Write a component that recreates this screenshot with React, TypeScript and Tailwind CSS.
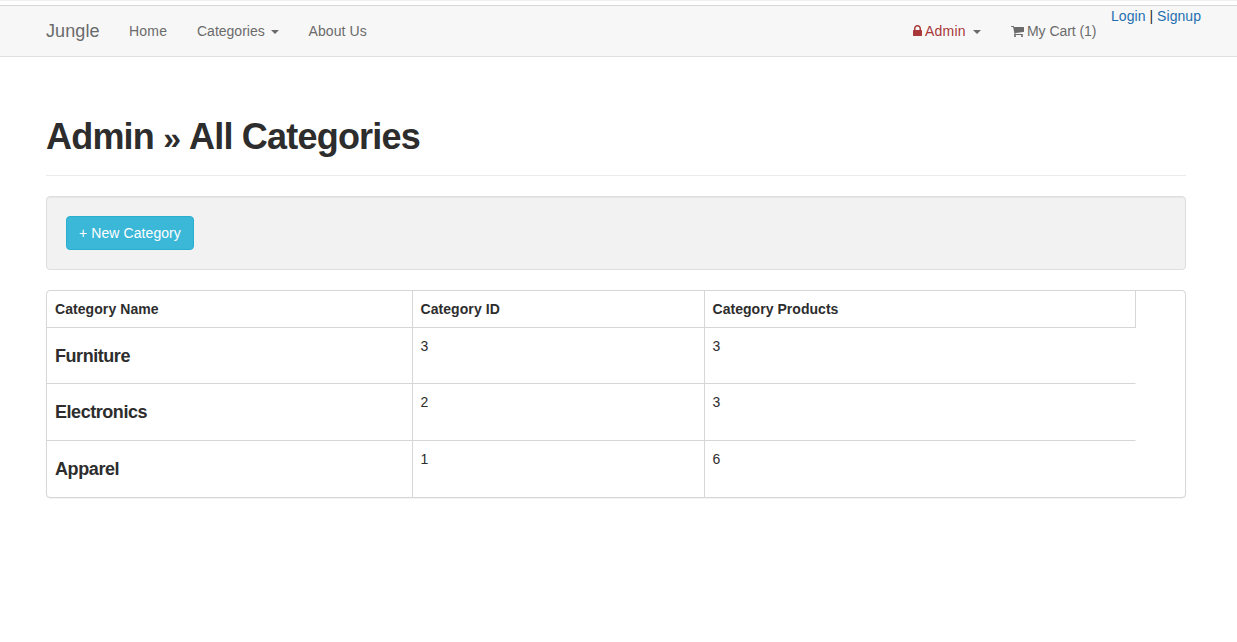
import React from "react";

const categories = [
  { name: "Furniture", id: 3, products: 3, track: "tracking-[-0.45px]", height: "h-14" },
  { name: "Electronics", id: 2, products: 3, track: "tracking-[-0.45px]", height: "h-[57px]" },
  { name: "Apparel", id: 1, products: 6, track: "tracking-[-0.4px]", height: "h-[57px]" },
];

function Caret() {
  return (
    <span className="mt-px h-0 w-0 border-x-4 border-t-4 border-x-transparent border-t-[#6b6b6b]" />
  );
}

function LockIcon() {
  return (
    <svg className="mr-[3px] h-[14px] w-[9px]" viewBox="320 0 1152 1792" fill="currentColor" aria-hidden="true">
      <path d="M640 768h512v-192q0-106-75-181t-181-75-181 75-75 181v192zm832 96v576q0 40-28 68t-68 28h-960q-40 0-68-28t-28-68v-576q0-40 28-68t68-28h32v-192q0-184 132-316t316-132 316 132 132 316v192h32q40 0 68 28t28 68z" />
    </svg>
  );
}

function CartIcon() {
  return (
    <svg className="mr-[3px] h-[14px] w-[13px]" viewBox="64 0 1664 1792" fill="currentColor" aria-hidden="true">
      <path d="M704 1536q0 52-38 90t-90 38-90-38-38-90 38-90 90-38 90 38 38 90zm896 0q0 52-38 90t-90 38-90-38-38-90 38-90 90-38 90 38 38 90zm128-1088v512q0 24-16.5 42.5t-40.5 21.5l-1044 122q13 60 13 70 0 16-24 64h920q26 0 45 19t19 45-19 45-45 19h-1024q-26 0-45-19t-19-45q0-11 8-31.5t16-36 21.5-40 15.5-29.5l-177-823h-204q-26 0-45-19t-19-45 19-45 45-19h256q16 0 28.5 6.5t19.5 15.5 13 24.5 8 26 5.5 29.5 4.5 26h1201q26 0 45 19t19 45z" />
    </svg>
  );
}

export default function App() {
  return (
    <div className="h-[642px] overflow-hidden border-t border-[#f0f0f0] bg-white font-['Liberation_Sans',Arial,sans-serif] text-sm leading-5 text-[#2d2d2d]">
      <nav className="mt-1 h-[52px] border-y border-t-[#d6d6d6] border-b-[#e0e0e0] bg-[#f7f7f7] pl-[46px] pr-9 text-[#6b6b6b]">
        <div className="flex h-[50px] items-center">
          <a className="w-[83px] text-lg leading-5 tracking-[0.1px]">Jungle</a>
          <a className="w-[68px] tracking-[0.2px]">Home</a>
          <a className="flex w-[111.5px] items-center">
            <span className="w-[74px]">Categories</span>
            <Caret />
          </a>
          <a className="tracking-[0.1px]">About Us</a>
          <div className="ml-auto flex items-center">
            <a className="flex w-[98px] items-center text-[#a9383a]">
              <LockIcon />
              <span className="w-[48px] tracking-[0.2px]">Admin</span>
              <Caret />
            </a>
            <a className="flex w-[100px] items-center">
              <CartIcon />
              <span className="tracking-[-0.05px]">My Cart (1)</span>
            </a>
            <div className="h-[50px] whitespace-nowrap text-[#1f6fb0] tracking-[0.05px]">
              <a>Login</a>
              <span className="text-[#2d2d2d]"> | </span>
              <a>Signup</a>
            </div>
          </div>
        </div>
      </nav>

      <main className="ml-[46px] w-[1140px] pt-[60px]">
        <header className="h-[59px] border-b border-[#ebebeb]">
          <h1 className="whitespace-nowrap text-4xl leading-10 font-bold tracking-[-0.8px]">
            Admin <span className="mr-[1px] inline-block w-[17px] text-[32px]">»</span> All Categories
          </h1>
        </header>

        <section className="mt-5 h-[74px] rounded border border-[#dedede] bg-[#f2f2f2] p-[19px] shadow-[inset_0_1px_1px_rgba(0,0,0,0.05)]">
          <button className="h-[34px] w-32 rounded border border-[#2aafcf] bg-[#3bb7d8] text-sm leading-5 tracking-[0.08px] whitespace-nowrap text-white">
            + New Category
          </button>
        </section>

        <section className="mt-5 h-[208px] rounded border border-[#d6d6d6] bg-white shadow-[0_1px_1px_rgba(0,0,0,0.05)]">
          <table className="w-[1089px] table-fixed border-separate border-spacing-0 text-left">
            <colgroup>
              <col className="w-[366px]" />
              <col className="w-[292px]" />
              <col className="w-[431px]" />
            </colgroup>
            <thead>
              <tr className="h-[37px]">
                <th className="border-r border-b border-[#d6d6d6] px-2 py-0 font-bold tracking-[0.07px]">Category Name</th>
                <th className="border-r border-b border-[#d6d6d6] px-[7.5px] py-0 font-bold tracking-[0.07px]">Category ID</th>
                <th className="border-r border-b border-[#d6d6d6] px-[7.5px] py-0 font-bold tracking-[0.04px]">Category Products</th>
              </tr>
            </thead>
            <tbody className="[&>tr:last-child>td]:border-b-0">
              {categories.map((category) => (
                <tr key={category.id} className={category.height}>
                  <td className="border-r border-b border-[#d6d6d6] px-2 pt-[18px] pb-0 align-top">
                    <h4 className={`text-lg leading-5 font-bold ${category.track}`}>{category.name}</h4>
                  </td>
                  <td className="border-r border-b border-[#d6d6d6] px-[7.5px] pt-2 pb-0 align-top">{category.id}</td>
                  <td className="border-r border-b border-r-transparent border-b-[#d6d6d6] px-[7.5px] pt-2 pb-0 align-top">{category.products}</td>
                </tr>
              ))}
            </tbody>
          </table>
        </section>
      </main>
    </div>
  );
}
